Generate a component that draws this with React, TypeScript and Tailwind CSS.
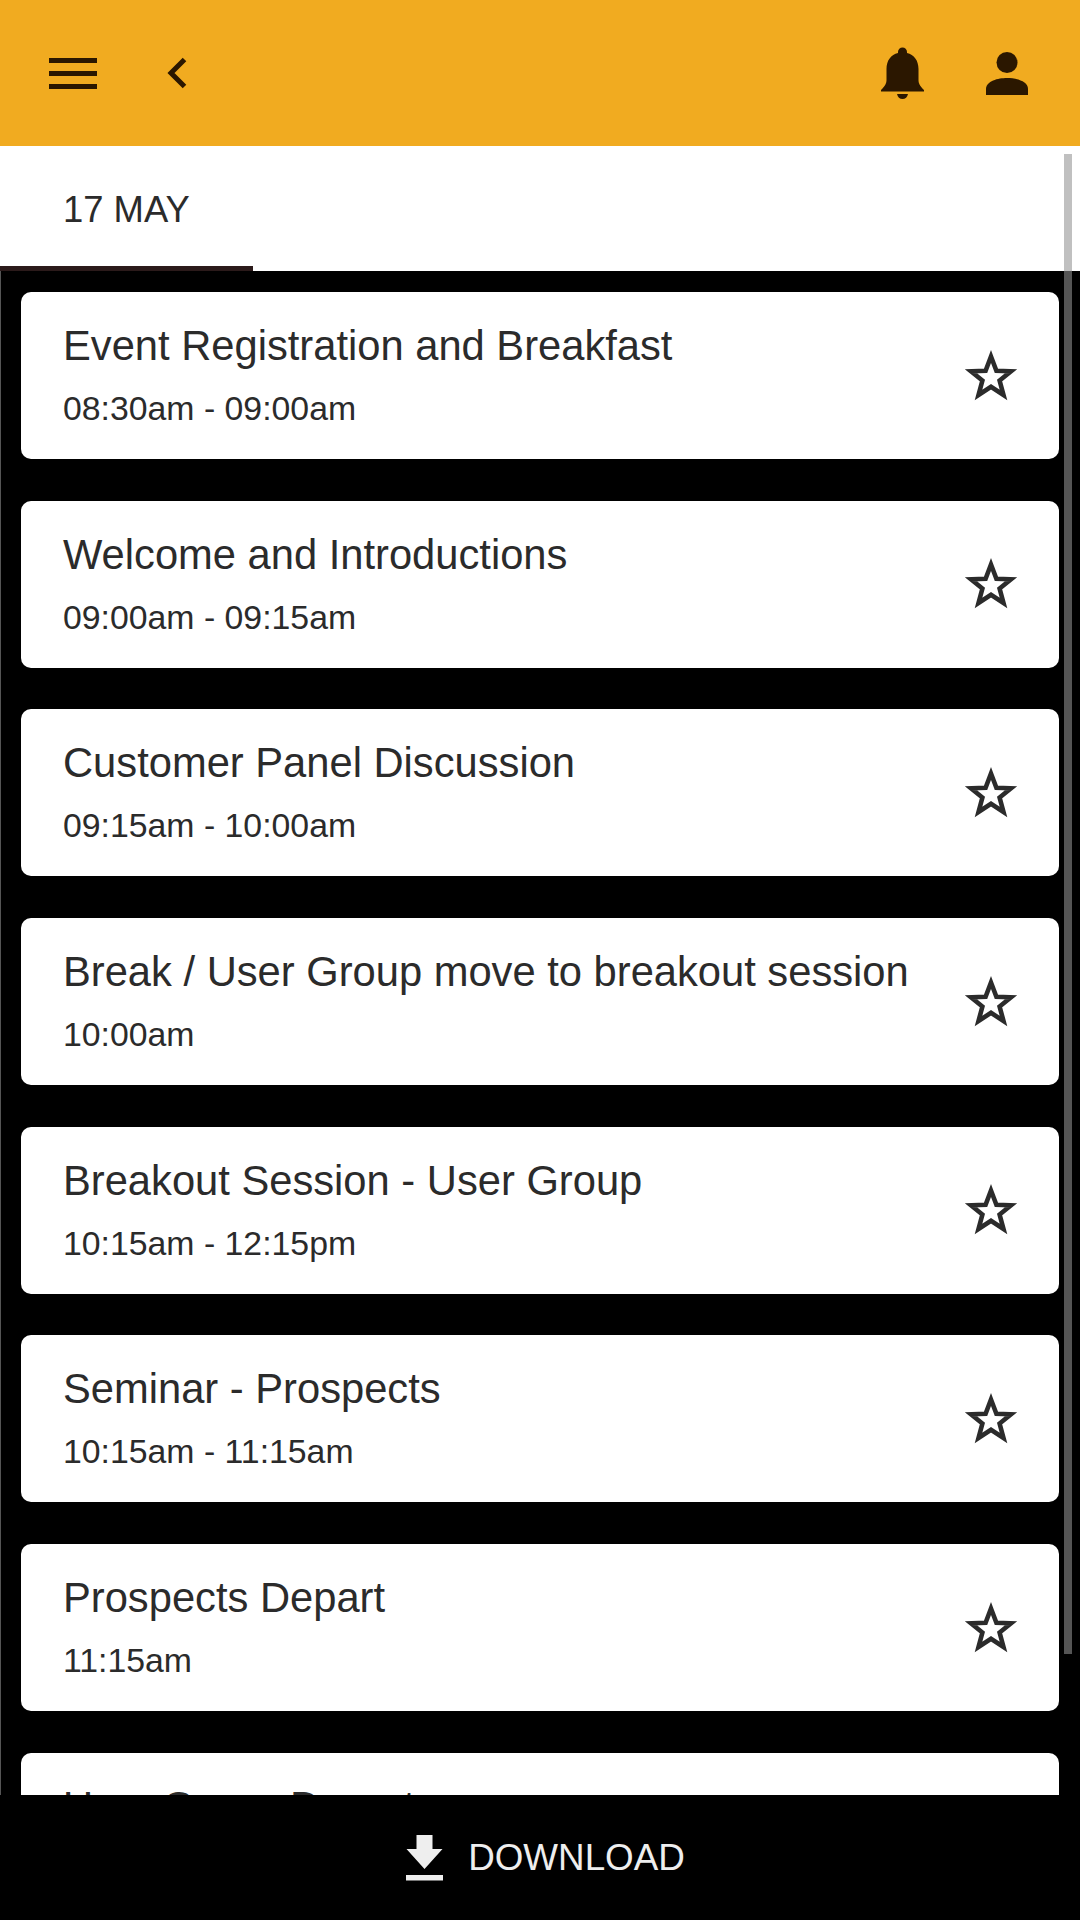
const sessions = [
  { title: "Event Registration and Breakfast", time: "08:30am - 09:00am" },
  { title: "Welcome and Introductions", time: "09:00am - 09:15am" },
  { title: "Customer Panel Discussion", time: "09:15am - 10:00am" },
  { title: "Break / User Group move to breakout session", time: "10:00am" },
  { title: "Breakout Session - User Group", time: "10:15am - 12:15pm" },
  { title: "Seminar - Prospects", time: "10:15am - 11:15am" },
  { title: "Prospects Depart", time: "11:15am" },
  { title: "User Group Depart", time: "12:15pm" },
];

const StarIcon = () => (
  <svg width="54" height="52" viewBox="0 0 54 52" className="shrink-0">
    <path
      d="M27 6.500 L32.400 20.700 L47 21.300 L35.600 30.500 L39.500 45 L27 36.800 L14.500 45 L18.400 30.500 L7 21.300 L21.600 20.700 Z"
      fill="none"
      stroke="#2b2b2b"
      strokeWidth="4.600"
      strokeLinejoin="miter"
    />
  </svg>
);

const SessionCard = ({ title, time }: { title: string; time: string }) => (
  <div className="flex h-[167px] shrink-0 items-center justify-between rounded-[10px] bg-white pl-[42px] pr-[41px]">
    <div className="pb-[2px] text-[#2b2b2b]">
      <div className="text-[41.700px] leading-[46px]">{title}</div>
      <div className="mt-[21px] text-[33.800px] leading-[36px]">{time}</div>
    </div>
    <StarIcon />
  </div>
);

export default function App() {
  return (
    <div className="relative flex h-[1920px] w-[1080px] flex-col overflow-hidden bg-black font-['Liberation_Sans',Arial,sans-serif]">
      <header className="flex h-[146px] shrink-0 items-center justify-between bg-[#f1ab20] pl-[49px] pr-[52px]">
        <div className="flex items-center gap-[70px]">
          <div className="flex w-[48px] flex-col gap-[8px]">
            <div className="h-[5px] bg-[#2b1700]" />
            <div className="h-[5px] bg-[#2b1700]" />
            <div className="h-[5px] bg-[#2b1700]" />
          </div>
          <svg width="20" height="32" viewBox="0 0 20 32">
            <path d="M17.500 2.500 L4 16 L17.500 29.500" fill="none" stroke="#2b1700" strokeWidth="5" />
          </svg>
        </div>
        <div className="flex items-center gap-[62px]">
          <svg width="43" height="52" viewBox="0 0 43 52">
            <path
              d="M21.500 0.500a4.500 4.500 0 0 1 4.500 4.500v1C33 7.500 37.500 13.500 37.500 22v11c0 3 1 5.500 5.500 10v1.500H0v-1.500C4.500 38.500 5.500 36 5.500 33V22C5.500 13.500 10 7.500 17 6V5A4.500 4.500 0 0 1 21.500 0.500Z"
              fill="#2b1700"
            />
            <path d="M16 47h11c-.5 3-2.800 5-5.500 5s-5-2-5.500-5Z" fill="#2b1700" />
          </svg>
          <svg width="42" height="43" viewBox="0 0 42 43">
            <circle cx="21" cy="10.500" r="10.500" fill="#2b1700" />
            <path d="M0 43V37C0 29 12 26 21 26s21 3 21 11v6Z" fill="#2b1700" />
          </svg>
        </div>
      </header>

      <div className="relative h-[125px] shrink-0 bg-white">
        <div className="pl-[63px] pt-[42px] text-[36.400px] leading-[44px] text-[#2b2b2b]">17 MAY</div>
        <div className="absolute bottom-0 left-0 h-[5px] w-[253px] bg-[#2b1a1a]" />
      </div>

      <main className="flex min-h-0 flex-1 flex-col gap-[41.700px] overflow-hidden border-l border-[#555] pl-[20px] pr-[21px] pt-[21px]">
        {sessions.map((s) => (
          <SessionCard key={s.title} title={s.title} time={s.time} />
        ))}
      </main>

      <footer className="flex h-[125px] shrink-0 items-center justify-center gap-[25px] bg-black pl-[11px] text-[36.800px] text-[#eeeeee]">
        <svg width="37" height="46" viewBox="0 0 37 46">
          <path d="M10.500 0h16v14h10L18.500 34 0.500 14h10Z" fill="#eeeeee" />
          <rect x="0" y="40" width="37" height="5.500" fill="#eeeeee" />
        </svg>
        <span>DOWNLOAD</span>
      </footer>

      {/* scrollbar */}
      <div className="absolute left-[1064px] top-[154px] h-[117px] w-[8px] bg-[#c0c0c0]" />
      <div className="absolute left-[1064px] top-[271px] h-[1383px] w-[8px] bg-[#555555]" />
    </div>
  );
}
